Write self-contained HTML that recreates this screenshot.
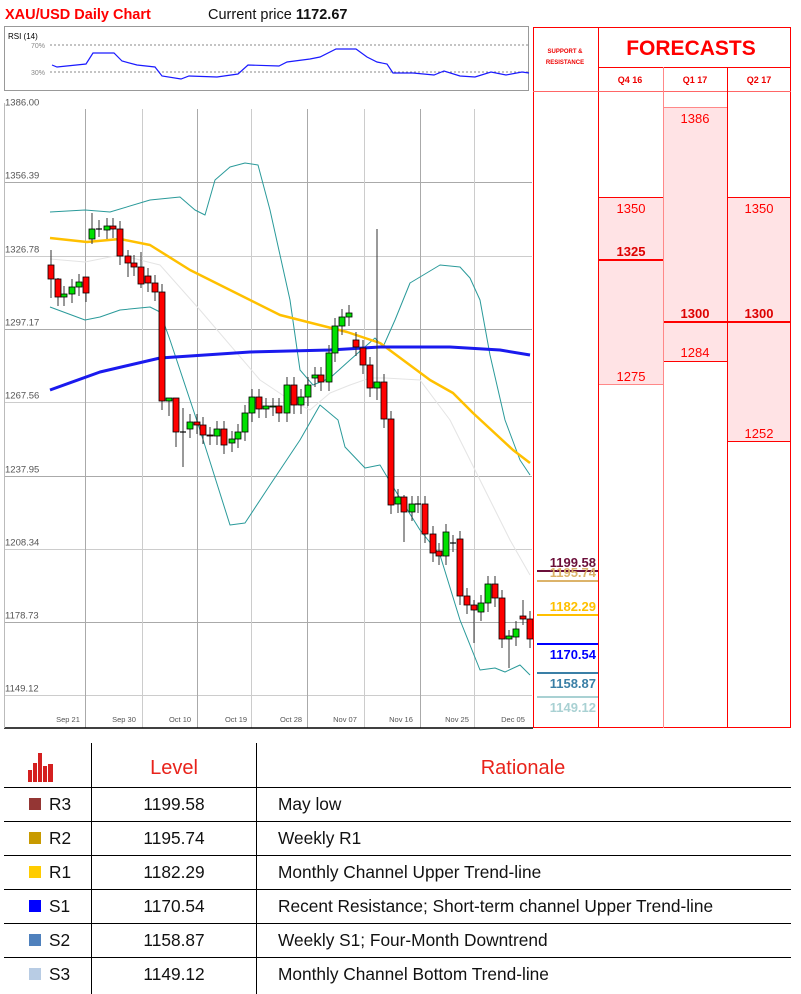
<!DOCTYPE html>
<html><head><meta charset="utf-8">
<style>
body{margin:0;width:801px;height:994px;background:#fff;overflow:hidden;font-family:"Liberation Sans",sans-serif}
svg{position:absolute;left:0;top:0}
</style></head><body>
<svg id="s" width="801" height="994" xmlns="http://www.w3.org/2000/svg" font-family="Liberation Sans, sans-serif">
<text x="5" y="19" font-size="14.5" font-weight="bold" fill="#ff0000">XAU/USD Daily Chart</text>
<text x="208" y="19" font-size="14.5" fill="#111">Current price <tspan font-weight="bold">1172.67</tspan></text>
<rect x="4.5" y="26.5" width="524" height="64" fill="#fff" stroke="#999"/>
<text x="8" y="39" font-size="8" fill="#000">RSI (14)</text>
<line x1="50" y1="45" x2="528" y2="45" stroke="#888" stroke-dasharray="2,2"/>
<line x1="50" y1="72" x2="528" y2="72" stroke="#888" stroke-dasharray="2,2"/>
<text x="31" y="48" font-size="7" fill="#888">70%</text>
<text x="31" y="75" font-size="7" fill="#888">30%</text>
<polyline fill="none" stroke="#1a1aff" stroke-width="1.2" points="52,65 57,67 86,64 93,53 114,53 122,61 137,65 155,67 162,76 181,79 189,76 217,77 238,74 248,65 279,66 287,62 310,59 320,57 336,49 356,49 367,57 377,62 387,64 393,73 413,73 434,75 444,71 460,76 475,77 491,72 506,75 522,72 529,73"/>
<g id="grid"></g>
<g id="lines"></g>
<g id="candles"></g>
<line x1="4" y1="728" x2="533" y2="728" stroke="#000" stroke-width="1.5"/>
<line x1="4.5" y1="103" x2="4.5" y2="728" stroke="#bbb"/>
<rect x="598" y="197" width="65" height="187" fill="#ffe3e5"/>
<rect x="663" y="107" width="64" height="254" fill="#ffe3e5"/>
<rect x="727" y="197" width="64" height="244" fill="#ffe3e5"/>
<g stroke="#f00" stroke-width="1">
<line x1="598" y1="197.5" x2="663" y2="197.5"/>
<line x1="598" y1="384.5" x2="663" y2="384.5" stroke="#f88"/>
<line x1="663" y1="107.5" x2="727" y2="107.5" stroke="#f88"/>
<line x1="663" y1="361.5" x2="727" y2="361.5"/>
<line x1="727" y1="197.5" x2="791" y2="197.5"/>
<line x1="727" y1="441.5" x2="791" y2="441.5"/>
<line x1="598" y1="260" x2="663" y2="260" stroke-width="2"/>
<line x1="663" y1="322" x2="791" y2="322" stroke-width="2"/>
<rect x="533.5" y="27.5" width="257" height="700" fill="none"/>
<line x1="598.5" y1="27" x2="598.5" y2="728"/>
<line x1="598" y1="67.5" x2="791" y2="67.5"/>
<line x1="533" y1="91.5" x2="791" y2="91.5" stroke="#f66"/>
<line x1="663.5" y1="67" x2="663.5" y2="728" stroke="#f88"/>
<line x1="727.5" y1="67" x2="727.5" y2="728"/>
</g>
<text x="565" y="53" font-size="6" font-weight="bold" fill="#e00" text-anchor="middle">SUPPORT &amp;</text>
<text x="565" y="64" font-size="6" font-weight="bold" fill="#e00" text-anchor="middle">RESISTANCE</text>
<text x="691" y="55" font-size="21" font-weight="bold" fill="#f00" text-anchor="middle">FORECASTS</text>
<g font-size="9" font-weight="bold" fill="#e00" text-anchor="middle">
<text x="630" y="83">Q4 16</text><text x="695" y="83">Q1 17</text><text x="759" y="83">Q2 17</text></g>
<g font-size="13" fill="#f00" text-anchor="middle">
<text x="631" y="213">1350</text><text x="631" y="256" font-weight="bold" fill="#d00">1325</text><text x="631" y="381">1275</text>
<text x="695" y="123">1386</text><text x="695" y="318" font-weight="bold" fill="#d00">1300</text><text x="695" y="357">1284</text>
<text x="759" y="213">1350</text><text x="759" y="318" font-weight="bold" fill="#d00">1300</text><text x="759" y="438">1252</text></g>
<line x1="537" y1="571" x2="598" y2="571" stroke="#6b0f3a" stroke-width="2"/>
<line x1="537" y1="581" x2="598" y2="581" stroke="#dcb36a" stroke-width="2"/>
<line x1="537" y1="615" x2="598" y2="615" stroke="#ffc000" stroke-width="2"/>
<line x1="537" y1="644" x2="598" y2="644" stroke="#0000ff" stroke-width="2"/>
<line x1="537" y1="673" x2="598" y2="673" stroke="#3a7fa6" stroke-width="2"/>
<line x1="537" y1="697" x2="598" y2="697" stroke="#a9d1d3" stroke-width="2"/>
<g font-size="13" font-weight="bold" text-anchor="end">
<text x="596" y="577" fill="#dcb36a">1195.74</text>
<text x="596" y="567" fill="#6b0f3a">1199.58</text>
<text x="596" y="611" fill="#ffc000">1182.29</text>
<text x="596" y="659" fill="#0000ff">1170.54</text>
<text x="596" y="688" fill="#3a7fa6">1158.87</text>
<text x="596" y="712" fill="#a9d1d3">1149.12</text></g>
<g stroke="#000" stroke-width="1">
<line x1="91.5" y1="743" x2="91.5" y2="994"/><line x1="256.5" y1="743" x2="256.5" y2="994"/>
<line x1="4" y1="787.5" x2="791" y2="787.5"/><line x1="4" y1="821.5" x2="791" y2="821.5"/>
<line x1="4" y1="855.5" x2="791" y2="855.5"/><line x1="4" y1="889.5" x2="791" y2="889.5"/>
<line x1="4" y1="923.5" x2="791" y2="923.5"/><line x1="4" y1="957.5" x2="791" y2="957.5"/>
</g>
<g fill="#d42020">
<rect x="28" y="770" width="4" height="12"/><rect x="33" y="763" width="4" height="19"/><rect x="38" y="753" width="4" height="29"/><rect x="43" y="766" width="4" height="16"/><rect x="48" y="764" width="5" height="18"/></g>
<text x="174" y="774" font-size="20" fill="#e8231b" text-anchor="middle">Level</text>
<text x="523" y="774" font-size="20" fill="#e8231b" text-anchor="middle">Rationale</text>
<g font-size="17.3" fill="#111">
<rect x="29" y="798" width="12" height="12" fill="#943634"/><text x="49" y="810">R3</text><text x="174" y="810" text-anchor="middle">1199.58</text><text x="278" y="810">May low</text>
<rect x="29" y="832" width="12" height="12" fill="#c89a00"/><text x="49" y="844">R2</text><text x="174" y="844" text-anchor="middle">1195.74</text><text x="278" y="844">Weekly R1</text>
<rect x="29" y="866" width="12" height="12" fill="#ffcc00"/><text x="49" y="878">R1</text><text x="174" y="878" text-anchor="middle">1182.29</text><text x="278" y="878">Monthly Channel Upper Trend-line</text>
<rect x="29" y="900" width="12" height="12" fill="#0000ff"/><text x="49" y="912">S1</text><text x="174" y="912" text-anchor="middle">1170.54</text><text x="278" y="912">Recent Resistance; Short-term channel Upper Trend-line</text>
<rect x="29" y="934" width="12" height="12" fill="#4f81bd"/><text x="49" y="946">S2</text><text x="174" y="946" text-anchor="middle">1158.87</text><text x="278" y="946">Weekly S1; Four-Month Downtrend</text>
<rect x="29" y="968" width="12" height="12" fill="#b8cce4"/><text x="49" y="980">S3</text><text x="174" y="980" text-anchor="middle">1149.12</text><text x="278" y="980">Monthly Channel Bottom Trend-line</text>
</g>
</svg>
<script>
var NS="http://www.w3.org/2000/svg";
function el(p,t,a,txt){var e=document.createElementNS(NS,t);for(var k in a)e.setAttribute(k,a[k]);if(txt)e.textContent=txt;document.getElementById(p).appendChild(e);return e;}
var labels=["1386.00","1356.39","1326.78","1297.17","1267.56","1237.95","1208.34","1178.73","1149.12"];
for(var i=0;i<9;i++){var y=Math.round(109+i*73.3)+0.5;
 if(i>0)el("grid","line",{x1:4,y1:y,x2:532,y2:y,stroke:i%2?"#aaa":"#ccc"});
 el("grid","text",{x:5,y:y-4,"font-size":9.5,fill:"#555"},labels[i]);}
var vx=[85,142,197,251,307,364,420,474];
vx.forEach(function(x,i){el("grid","line",{x1:x+.5,y1:109,x2:x+.5,y2:728,stroke:i%2?"#ccc":"#aaa"});});
var dl=["Sep 21","Sep 30","Oct 10","Oct 19","Oct 28","Nov 07","Nov 16","Nov 25","Dec 05"];
var dx=[68,124,180,236,291,345,401,457,513];
dl.forEach(function(d,i){el("grid","text",{x:dx[i],y:722,"font-size":7.5,fill:"#555","text-anchor":"middle"},d);});
function pl(pts,c,w){el("lines","polyline",{points:pts,fill:"none",stroke:c,"stroke-width":w,"stroke-linejoin":"round"});}
pl("50,259 85,262 120,255 160,265 200,310 260,380 290,400 310,410 330,393 350,385 370,378 385,378 420,380 450,420 480,480 510,540 530,575","#e4e4e4",1);
pl("50,212 85,210 110,212 150,200 180,197 195,210 205,215 215,180 230,167 245,163 258,165 270,210 290,300 300,370 313,385 330,378 350,360 375,338 383,347 395,320 410,283 440,265 460,267 470,278 480,300 490,355 505,420 520,460 530,475","#2a9a9a",1);
pl("50,307 85,320 100,317 120,310 150,307 160,312 170,340 200,430 230,525 245,523 270,485 300,440 320,405 338,420 345,447 365,468 380,465 395,490 420,530 440,555 460,620 480,670 495,668 505,672 520,665 530,675","#2a9a9a",1);
pl("50,238 87,242 120,239 150,245 190,270 240,295 280,315 347,332 380,343 430,380 453,393 473,413 513,450 530,463","#ffc000",2.5);
pl("50,390 100,372 160,358 250,352 330,350 380,347 450,347 500,350 530,355","#1a1aee",3);
var c=[[51,265,279,250,298],[58,279,297,278,306],[64,297,294],[72,294,287],[79,287,282],[86,277,293,277,302],[92,239,229,213,244],[99,229,229,220,237],[107,230,226],[113,226,229],[120,229,256],[128,256,263,250,277],[134,263,267],[141,267,284,252,288],[148,276,283],[155,283,292],[162,292,401],[169,401,398,398,416],[176,398,432,398,447],[183,432,432,408,467],[190,429,422],[197,422,425],[203,425,435],[210,435,436],[217,436,429],[224,429,445],[232,443,439],[238,439,432],[245,432,413],[252,413,397],[259,397,409],[266,409,406],[273,407,406],[279,406,413],[287,413,385],[294,385,405],[301,405,397],[308,397,385],[315,378,375],[321,375,382],[329,382,353],[335,353,326],[342,326,317],[349,317,313],[356,340,347],[363,348,365],[370,365,388],[377,388,382,229,400],[384,382,419],[391,419,505],[398,504,497],[404,497,512,495,542],[412,512,504],[418,504,504],[425,504,534],[433,534,553],[439,551,556],[446,556,532],[453,543,543],[460,539,596],[467,596,605],[474,605,610,600,643],[481,612,603],[488,603,584],[495,584,598],[502,598,639],[509,639,636,630,668],[516,637,629],[523,616,619,600,625],[530,619,639]];
c.forEach(function(d){var x=d[0],o=d[1],cl=d[2];var t=Math.min(o,cl),b=Math.max(o,cl);
 var h=d[3]!==undefined?d[3]:t-8, l=d[4]!==undefined?d[4]:b+9;
 el("candles","line",{x1:x,y1:h,x2:x,y2:l,stroke:"#333","stroke-width":1});
 if(b-t<1){el("candles","line",{x1:x-3,y1:t,x2:x+3,y2:t,stroke:"#000","stroke-width":1.2});return;}
 el("candles","rect",{x:x-3,y:t,width:6,height:b-t,fill:cl<o?"#00e000":"#ff0000",stroke:"#000","stroke-width":0.8});});
</script>
</body></html>
